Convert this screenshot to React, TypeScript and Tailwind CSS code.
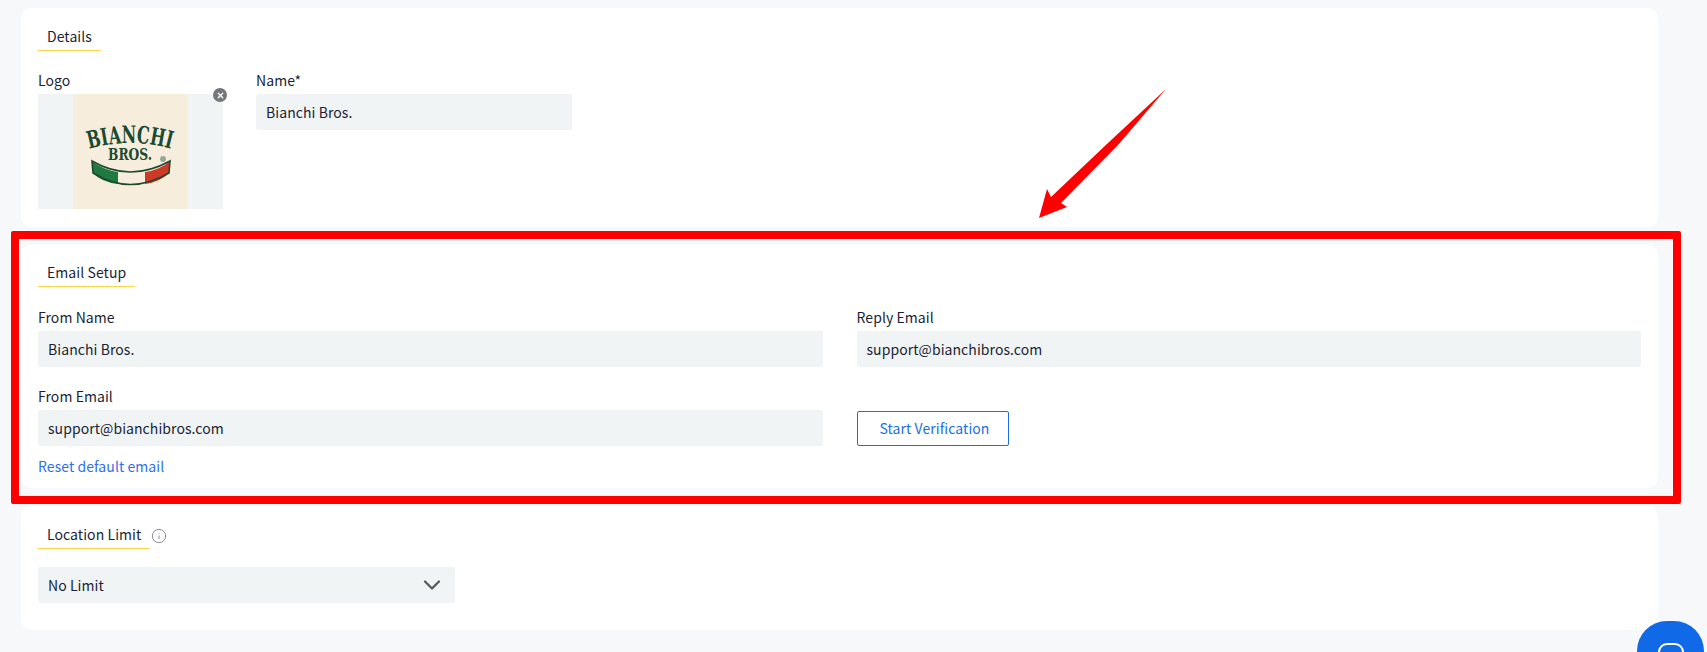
import React from 'react';
import { ChevronDown, Info, X } from 'lucide-react';

const SectionTitle = ({ title, icon }: { title: string; icon?: React.ReactNode }) => (
  <div className="flex items-center h-[27px]">
    <div className="h-full px-[9px] border-b border-[#fbd54a] leading-[24px] text-[14px] tracking-[0.07px] text-[#1a1f36]">{title}</div>
    {icon}
  </div>
);

const Field = ({ label, value, className }: { label: string; value: string; className?: string }) => (
  <div className={className}>
    <div className="h-[20px] leading-[20px] mb-[4px] text-[14px] tracking-[0.07px] text-[#1a1f36]">{label}</div>
    <div className="h-[36px] px-[10px] flex items-center rounded-[2px] bg-[#f1f4f5] text-[14px] tracking-[0.07px] text-[#1a1f36]">{value}</div>
  </div>
);

const BianchiLogo = () => (
  <svg viewBox="0 0 115 115" className="w-[115px] h-[115px] bg-[#f6eddd]">
    <defs>
      <path id="logoArc" d="M16 55 Q57 43 99 55" fill="none" />
    </defs>
    <text fontFamily="'DejaVu Serif', serif" fontWeight="700" fontSize="24" fill="#1c4a30" textLength="83" lengthAdjust="spacingAndGlyphs">
      <textPath href="#logoArc">BIANCHI</textPath>
    </text>
    <text x="35" y="66" fontFamily="'DejaVu Serif', serif" fontWeight="700" fontSize="17" fill="#1c4a30" textLength="44" lengthAdjust="spacingAndGlyphs">BROS.</text>
    <circle cx="90" cy="65" r="3" fill="#9aa69a" />
    <path d="M19 67 Q30 76 45 78 L45 90 Q28 88 20 79 Z" fill="#1f7a3f" />
    <path d="M45 78 Q58 80 72 78 L72 90 Q58 92 45 90 Z" fill="#f6eddd" />
    <path d="M72 78 Q87 76 97 67 L96 79 Q87 88 72 90 Z" fill="#cf3a27" />
    <path d="M19 67 Q57 89 97 67 L96 79 Q57 102 20 79 Z" fill="none" stroke="#1c4a30" strokeWidth="1.6" />
  </svg>
);

export default function App() {
  return (
    <div className="relative h-[652px] overflow-hidden bg-[#f7f8fa] font-['Noto_Sans_CJK_SC','Noto_Sans',sans-serif]">
      <div className="flex flex-col gap-[18px] pt-[8px] pl-[21px] pr-[49px]">
        {/* Details */}
        <section className="h-[219px] rounded-[10px] bg-white px-[17px] pt-[16px]">
          <SectionTitle title="Details" />
          <div className="flex gap-[33px] mt-[19px]">
            <div className="w-[185px]">
              <div className="h-[20px] leading-[20px] mb-[4px] text-[14px] tracking-[0.07px] text-[#1a1f36]">Logo</div>
              <div className="relative flex justify-center h-[115px] bg-[#f1f4f5]">
                <BianchiLogo />
                <span className="absolute top-[-6px] right-[-4px] flex items-center justify-center w-[14px] h-[14px] rounded-full bg-[#75767c] text-white">
                  <X size={9} strokeWidth={3.5} />
                </span>
              </div>
            </div>
            <Field label="Name*" value="Bianchi Bros." className="w-[316px]" />
          </div>
        </section>

        {/* Email Setup */}
        <section className="h-[243px] rounded-[10px] bg-white px-[17px] pt-[15px]">
          <SectionTitle title="Email Setup" />
          <div className="grid grid-cols-2 gap-x-[34px] gap-y-[19px] mt-[20px]">
            <Field label="From Name" value="Bianchi Bros." />
            <Field label="Reply Email" value="support@bianchibros.com" />
            <Field label="From Email" value="support@bianchibros.com" />
            <div className="flex items-end">
              <button className="w-[152px] h-[35px] pl-[4px] rounded-[2px] border border-[#1b6fe0] text-[14px] tracking-[0.07px] text-[#1b6fe0]">Start Verification</button>
            </div>
          </div>
          <a className="block mt-[10px] leading-[20px] text-[14px] tracking-[0.07px] text-[#2f6fed]">Reset default email</a>
        </section>

        {/* Location Limit */}
        <section className="h-[124px] rounded-[10px] bg-white px-[17px] pt-[16px]">
          <SectionTitle title="Location Limit" icon={<Info size={16} strokeWidth={1.5} className="ml-[1px] text-[#8a8c93]" />} />
          <div className="flex items-center justify-between w-[417px] h-[36px] mt-[18px] pl-[10px] pr-[9px] rounded-[2px] bg-[#f1f4f5] text-[14px] tracking-[0.07px] text-[#1a1f36]">
            No Limit
            <ChevronDown size={28} strokeWidth={1.9} className="text-[#55585e]" />
          </div>
        </section>
      </div>

      {/* annotation drawn over the page */}
      <div className="absolute left-[11px] top-[231px] w-[1670px] h-[273px] rounded-[2px] border-[8px] border-[#ff0000] pointer-events-none" />
      <svg className="absolute left-0 top-0 pointer-events-none" width="1707" height="652">
        <polygon points="1166,89 1118,145 1061,203 1067,207 1039,218 1047,189 1051,197 1108,143" fill="#ff0000" />
      </svg>

      <div className="absolute left-[1637px] top-[621px] flex justify-center w-[67px] h-[67px] rounded-[30px] bg-[#106ae8]">
        <span className="mt-[22px] w-[26px] h-[28px] rounded-[9px] border-[2px] border-white" />
      </div>
    </div>
  );
}
